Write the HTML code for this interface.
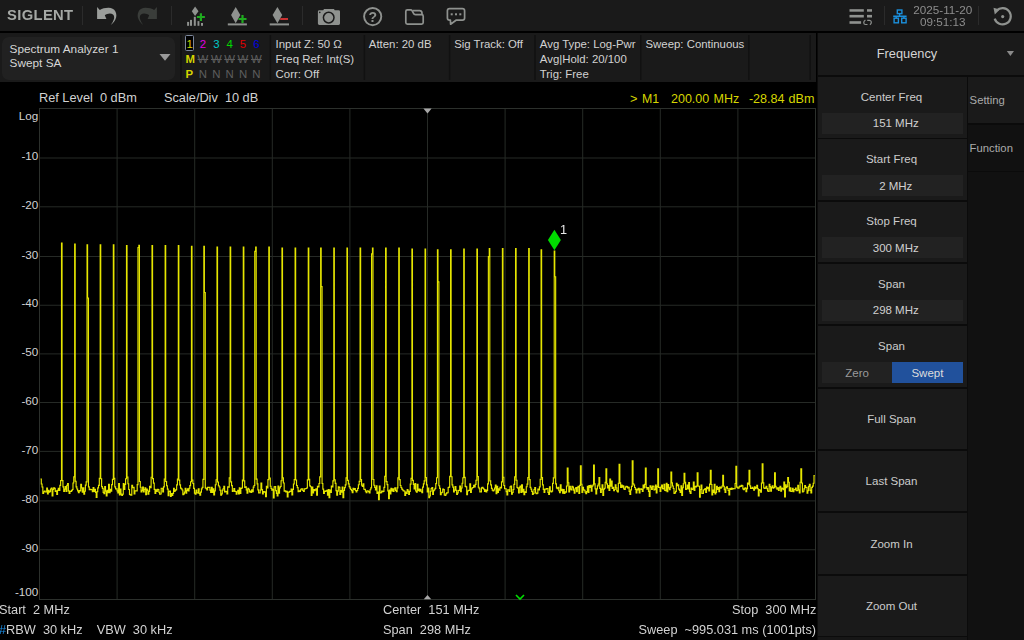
<!DOCTYPE html><html lang="en"><head><meta charset="utf-8"><title>Spectrum Analyzer</title><style>
*{margin:0;padding:0;box-sizing:border-box}
html,body{width:1024px;height:640px;overflow:hidden;background:#000}
body{position:relative;font-family:"Liberation Sans",sans-serif;color:#d2d2d2;font-size:11.4px;line-height:15px}
.a{position:absolute;white-space:pre}
.bar{position:absolute;background:#1a1a1a}
.sep{position:absolute;width:1px;background:#2b2b2b}
.dsep{position:absolute;width:2px;background:#101010;top:35px;height:45px}
.t{position:absolute;white-space:pre;line-height:15px}
.cell{position:absolute;left:818px;width:149px;background:#1a1a1a;height:60.5px}
.lbl{position:absolute;left:-1px;width:149px;text-align:center;white-space:pre;color:#cccccc;font-size:11.5px;line-height:14px}
.val{position:absolute;left:4px;width:140.5px;height:21px;background:#222;text-align:center;white-space:pre;color:#d0d0d0;font-size:11.5px;line-height:21px}
.ax{position:absolute;width:38.3px;left:0;text-align:right;white-space:pre;font-size:11.7px;line-height:12px;color:#d2d2d2}
.bt{position:absolute;white-space:pre;font-size:13.5px;line-height:15px;color:#d2d2d2;transform:scaleX(0.944);transform-origin:0 0}
.btr{transform-origin:100% 0}
</style></head><body>
<div class="bar" style="left:0;top:0;width:1024px;height:31px"></div>
<div class="a" style="left:6.6px;top:7.3px;font-weight:bold;font-size:14.6px;line-height:17px;color:#a6a9a6;letter-spacing:0.35px;transform-origin:0 0;transform:scaleX(1.012);will-change:transform">SIGLENT</div>
<div class="sep" style="left:81.5px;top:6px;height:19px"></div>
<div class="sep" style="left:171px;top:6px;height:19px"></div>
<div class="sep" style="left:302px;top:6px;height:19px"></div>
<div class="sep" style="left:884px;top:6px;height:19px"></div>
<div class="sep" style="left:977.5px;top:6px;height:19px"></div>
<svg class="a" style="left:0;top:0" width="1024" height="31" viewBox="0 0 1024 31">
<path transform="translate(96.8,7)" d="M0.3,0 L0.3,12 L9.6,12 L8,8.2 C10,6.6 14,5.6 16.2,7.5 C17.6,8.8 17.6,11 17,12.5 C16.4,14.5 15.4,16.2 14,18 C16.5,16 18,14 18.8,12 C19.8,9.6 19.9,7 18.6,4.4 C17.4,2 14.6,0.8 12,0.7 C8.8,0.6 5.4,1.4 3,2.9 Z" fill="#9b9e9b"/>
<path transform="translate(157.2,7) scale(-1,1)" d="M0.3,0 L0.3,12 L9.6,12 L8,8.2 C10,6.6 14,5.6 16.2,7.5 C17.6,8.8 17.6,11 17,12.5 C16.4,14.5 15.4,16.2 14,18 C16.5,16 18,14 18.8,12 C19.8,9.6 19.9,7 18.6,4.4 C17.4,2 14.6,0.8 12,0.7 C8.8,0.6 5.4,1.4 3,2.9 Z" fill="#3a3d3a"/>
<path d="M195.1,6.6 L198.5,11.3 L195.1,16 L191.8,11.3 Z" fill="#8f928f"/>
<rect x="187.1" y="21.9" width="2.0" height="3.9" fill="#8f928f"/>
<rect x="190" y="19.9" width="2" height="5.9" fill="#8f928f"/>
<rect x="193.8" y="16.8" width="2.0" height="9.0" fill="#8f928f"/>
<rect x="197.5" y="21.1" width="1.9" height="4.7" fill="#8f928f"/>
<rect x="201" y="23" width="2" height="2.8" fill="#8f928f"/>
<path d="M196.9,17 H204.9 M200.9,13.2 V20.9" stroke="#1faa1f" stroke-width="2.2" fill="none"/>
<path d="M235.7,7 L240.3,15 L235.7,23.2 L231.1,15 Z" fill="#8f928f"/>
<rect x="227.8" y="23.4" width="19.1" height="2" fill="#8f928f"/>
<path d="M238.5,19 H246.5 M242.5,15 V23" stroke="#1faa1f" stroke-width="2.2" fill="none"/>
<path d="M277.4,7 L282.2,15 L277.4,23.2 L272.6,15 Z" fill="#8f928f"/>
<rect x="269.7" y="23.4" width="19.3" height="2" fill="#8f928f"/>
<rect x="280.2" y="18" width="7.8" height="2" fill="#c83232"/>
<path d="M319.3,10.2 H323.2 L324,9 H334 L334.7,10.2 H338.6 Q340,10.2 340,11.6 V23.6 Q340,25 338.6,25 H319.3 Q317.9,25 317.9,23.6 V11.6 Q317.9,10.2 319.3,10.2 Z" fill="#8f928f"/>
<circle cx="328.7" cy="17.6" r="5.3" fill="none" stroke="#1a1a1a" stroke-width="1.5"/>
<circle cx="319.8" cy="12.4" r="0.8" fill="#1a1a1a"/>
<circle cx="372.7" cy="16.6" r="8.6" fill="none" stroke="#8f928f" stroke-width="1.9"/>
<text x="372.8" y="21.8" text-anchor="middle" font-family="Liberation Sans, sans-serif" font-size="14" font-weight="bold" fill="#8f928f">?</text>
<path d="M405.8,11.5 Q405.8,9.9 407.4,9.9 H410.6 Q411.6,9.9 412.2,10.9 L413.4,13.2 Q414,14.6 415.4,14.6 H421.6 Q423.2,14.6 423.2,16.2 V22.5 Q423.2,24.1 421.6,24.1 H407.4 Q405.8,24.1 405.8,22.5 Z" fill="none" stroke="#8f928f" stroke-width="1.7"/>
<path d="M412.6,10.6 H419.6 Q421.8,10.6 422,13 V14.8" fill="none" stroke="#8f928f" stroke-width="1.7"/>
<path d="M449.6,8.6 H462.4 Q464.6,8.6 464.6,10.8 V18 Q464.6,20.2 462.4,20.2 H456 L450.6,24.2 L450.4,20.2 H449.6 Q447.4,20.2 447.4,18 V10.8 Q447.4,8.6 449.6,8.6 Z" fill="none" stroke="#8f928f" stroke-width="1.7" stroke-linejoin="round"/>
<rect x="450.7" y="13.3" width="2" height="2" fill="#8f928f"/>
<rect x="455" y="13.3" width="2" height="2" fill="#8f928f"/>
<rect x="459.3" y="13.3" width="2" height="2" fill="#8f928f"/>
<rect x="849.5" y="9.2" width="14.3" height="2.5" fill="#8f928f"/>
<rect x="867" y="9.2" width="5" height="2.5" fill="#8f928f"/>
<rect x="849.5" y="14.9" width="14.3" height="2.6" fill="#8f928f"/>
<rect x="867" y="14.9" width="5" height="2.6" fill="#8f928f"/>
<rect x="849.5" y="21.2" width="11.6" height="2.6" fill="#8f928f"/>
<path d="M865.4,19.9 C863.1,21.4 863.2,24.3 865.6,24.5 H867.5 M867.2,20.3 H869.4 C871.8,20.5 872,23.2 869.9,24.7" fill="none" stroke="#8f928f" stroke-width="1.2"/>
<g fill="none" stroke="#1b8fdc" stroke-width="1.4"><rect x="897.3" y="10" width="4.6" height="3.6"/><path d="M899.6,13.8 V16.2 M893.2,16.2 H906.6 M896.2,16.2 V18 M903.9,16.2 V18"/><rect x="894.1" y="18.2" width="4.3" height="4.6"/><rect x="901.7" y="18.2" width="4.4" height="4.6"/></g>
<path d="M996.6,10.6 A8.2,8.2 0 1 1 994.7,18.6" fill="none" stroke="#8f928f" stroke-width="2.2"/>
<path d="M993.5,7.8 L999.8,9.4 L994.8,14.6 Z" fill="#8f928f"/>
<circle cx="1002.7" cy="16.6" r="1.6" fill="#8f928f"/>
</svg>
<div class="a" style="left:902.8px;width:80px;top:3.8px;text-align:center;font-size:11.7px;line-height:12.5px;color:#8d8d8d">2025-11-20
09:51:13</div>
<div class="bar" style="left:0;top:33px;width:816px;height:49px"></div>
<div class="a" style="left:2px;top:37px;width:172.5px;height:42.5px;background:#212121;border-radius:7px"></div>
<div class="t" style="left:9.6px;top:43.2px;font-size:11.8px;line-height:13.9px;color:#d6d6d6">Spectrum Analyzer 1
Swept SA</div>
<svg class="a" style="left:159px;top:53px" width="13" height="9"><path d="M0.5,1 H11.5 L6,7.8 Z" fill="#9a9a9a"/></svg>
<svg class="a" style="left:0;top:33px" width="816" height="49">
<rect x="180.25" y="2" width="1.5" height="45" fill="#111"/>
<rect x="269.65" y="2" width="1.5" height="45" fill="#111"/>
<rect x="363.65" y="2" width="1.5" height="45" fill="#111"/>
<rect x="448.85" y="2" width="1.5" height="45" fill="#111"/>
<rect x="534.25" y="2" width="1.5" height="45" fill="#111"/>
<rect x="640.00" y="2" width="1.5" height="45" fill="#111"/>
<rect x="748.15" y="2" width="1.5" height="45" fill="#111"/>
<rect x="809.45" y="2" width="1.5" height="45" fill="#111"/>
</svg>
<div class="a" style="left:185.2px;top:35px;width:8.8px;height:15.8px;border:1.6px solid #7c879c;border-radius:1.5px;background:#000"></div>
<div class="t" style="left:182.60px;width:14px;top:36.65px;text-align:center;font-size:11.4px;color:#d4d400">1</div>
<div class="t" style="left:183.30px;width:14px;top:51.7px;text-align:center;font-size:11.4px;color:#d4d400;font-weight:bold">M</div>
<div class="t" style="left:182.30px;width:14px;top:66.7px;text-align:center;font-size:11.4px;color:#d4d400;font-weight:bold">P</div>
<div class="t" style="left:195.95px;width:14px;top:36.65px;text-align:center;font-size:11.4px;color:#e000e0">2</div>
<div class="t" style="left:195.95px;width:14px;top:51.7px;text-align:center;font-size:11.4px;color:#5e5e5e;text-decoration:line-through">W</div>
<div class="t" style="left:195.95px;width:14px;top:66.7px;text-align:center;font-size:11.4px;color:#5e5e5e">N</div>
<div class="t" style="left:209.30px;width:14px;top:36.65px;text-align:center;font-size:11.4px;color:#00c8c8">3</div>
<div class="t" style="left:209.30px;width:14px;top:51.7px;text-align:center;font-size:11.4px;color:#5e5e5e;text-decoration:line-through">W</div>
<div class="t" style="left:209.30px;width:14px;top:66.7px;text-align:center;font-size:11.4px;color:#5e5e5e">N</div>
<div class="t" style="left:222.65px;width:14px;top:36.65px;text-align:center;font-size:11.4px;color:#00dc00">4</div>
<div class="t" style="left:222.65px;width:14px;top:51.7px;text-align:center;font-size:11.4px;color:#5e5e5e;text-decoration:line-through">W</div>
<div class="t" style="left:222.65px;width:14px;top:66.7px;text-align:center;font-size:11.4px;color:#5e5e5e">N</div>
<div class="t" style="left:236.00px;width:14px;top:36.65px;text-align:center;font-size:11.4px;color:#e00000">5</div>
<div class="t" style="left:236.00px;width:14px;top:51.7px;text-align:center;font-size:11.4px;color:#5e5e5e;text-decoration:line-through">W</div>
<div class="t" style="left:236.00px;width:14px;top:66.7px;text-align:center;font-size:11.4px;color:#5e5e5e">N</div>
<div class="t" style="left:249.35px;width:14px;top:36.65px;text-align:center;font-size:11.4px;color:#0000e0">6</div>
<div class="t" style="left:249.35px;width:14px;top:51.7px;text-align:center;font-size:11.4px;color:#5e5e5e;text-decoration:line-through">W</div>
<div class="t" style="left:249.35px;width:14px;top:66.7px;text-align:center;font-size:11.4px;color:#5e5e5e">N</div>
<div class="t" style="left:275.6px;top:36.65px">Input Z: 50 Ω
Freq Ref: Int(S)
Corr: Off</div>
<div class="t" style="left:368.8px;top:36.65px">Atten: 20 dB</div>
<div class="t" style="left:454.2px;top:36.65px">Sig Track: Off</div>
<div class="t" style="left:539.8px;top:36.65px">Avg Type: Log-Pwr
Avg|Hold: 20/100
Trig: Free</div>
<div class="t" style="left:645.5px;top:36.65px">Sweep: Continuous</div>
<div class="a" style="left:817px;top:33px;width:207px;height:607px;background:#0b0b0b"></div>
<div class="bar" style="left:818px;top:33px;width:206px;height:42px"></div>
<div class="a" style="left:818px;top:33px;width:178px;height:42px;line-height:42px;text-align:center;font-size:12.8px;color:#d4d4d4">Frequency</div>
<svg class="a" style="left:1006px;top:50px" width="9" height="7"><path d="M0.8,1 H8 L4.4,6 Z" fill="#8a8a8a"/></svg>
<div class="a" style="left:968px;top:77px;width:56px;height:46px;background:#1a1a1a"></div>
<div class="a" style="left:968px;top:124.5px;width:56px;height:46.3px;background:#111"></div>
<div class="a" style="left:968px;top:172px;width:56px;height:468px;background:#111"></div>
<div class="t" style="left:969.6px;top:93px;font-size:11.3px;color:#aaa">Setting</div>
<div class="t" style="left:969.6px;top:140.7px;font-size:11.3px;color:#aaa">Function</div>
<div class="cell" style="top:77.00px">
<div class="lbl" style="top:12.6px">Center Freq</div>
<div class="val" style="top:35.6px;padding-top:0.6px;padding-left:7px">151 MHz</div>
</div>
<div class="cell" style="top:139.33px">
<div class="lbl" style="top:12.6px">Start Freq</div>
<div class="val" style="top:35.6px;padding-top:0.6px;padding-left:7px">2 MHz</div>
</div>
<div class="cell" style="top:201.66px">
<div class="lbl" style="top:12.6px">Stop Freq</div>
<div class="val" style="top:35.6px;padding-top:0.6px;padding-left:7px">300 MHz</div>
</div>
<div class="cell" style="top:263.99px">
<div class="lbl" style="top:12.6px">Span</div>
<div class="val" style="top:35.6px;padding-top:0.6px;padding-left:7px">298 MHz</div>
</div>
<div class="cell" style="top:326.32px">
<div class="lbl" style="top:12.6px">Span</div>
<div class="val" style="top:35.6px;padding-top:0.6px;width:70.3px;color:#9a9a9a">Zero</div><div class="val" style="top:35.6px;padding-top:0.6px;left:74.3px;width:70.3px;background:#21519c;color:#dcdcdc">Swept</div>
</div>
<div class="cell" style="top:388.65px">
<div class="lbl" style="top:23.4px">Full Span</div>
</div>
<div class="cell" style="top:450.98px">
<div class="lbl" style="top:23.4px">Last Span</div>
</div>
<div class="cell" style="top:513.31px">
<div class="lbl" style="top:23.4px">Zoom In</div>
</div>
<div class="cell" style="top:575.64px">
<div class="lbl" style="top:23.4px">Zoom Out</div>
</div>
<div class="a" style="left:818px;top:637px;width:149px;height:3px;background:#161616"></div>
<div class="bt" style="left:38.5px;top:89.8px">Ref Level  0 dBm</div>
<div class="bt" style="left:164.1px;top:89.8px">Scale/Div  10 dB</div>
<div class="bt" style="left:630.2px;top:91.2px;color:#d6d600">&gt;</div>
<div class="bt" style="left:642.3px;top:91.2px;color:#d6d600;font-size:13.1px">M1</div>
<div class="bt" style="left:671.3px;top:91.2px;color:#d6d600;font-size:13.25px;word-spacing:0.8px">200.00 MHz</div>
<div class="bt btr" style="right:210px;top:91.2px;color:#d6d600;font-size:13.35px;word-spacing:0.4px">-28.84 dBm</div>
<div class="ax" style="top:109.6px">Log</div>
<div class="ax" style="top:150.1px">-10</div>
<div class="ax" style="top:198.9px">-20</div>
<div class="ax" style="top:248.6px">-30</div>
<div class="ax" style="top:297.4px">-40</div>
<div class="ax" style="top:346.0px">-50</div>
<div class="ax" style="top:394.6px">-60</div>
<div class="ax" style="top:443.5px">-70</div>
<div class="ax" style="top:493.0px">-80</div>
<div class="ax" style="top:541.9px">-90</div>
<div class="ax" style="top:585.9px">-100</div>
<svg class="a" style="left:0;top:0" width="1024" height="640" viewBox="0 0 1024 640">
<g stroke="#262a26" stroke-width="1" fill="none">
<path d="M117.10,108 V600"/>
<path d="M39,158.00 H816"/>
<path d="M194.70,108 V600"/>
<path d="M39,206.80 H816"/>
<path d="M272.30,108 V600"/>
<path d="M39,256.50 H816"/>
<path d="M349.90,108 V600"/>
<path d="M39,305.25 H816"/>
<path d="M427.50,108 V600"/>
<path d="M39,353.90 H816"/>
<path d="M505.10,108 V600"/>
<path d="M39,402.50 H816"/>
<path d="M582.70,108 V600"/>
<path d="M39,451.40 H816"/>
<path d="M660.30,108 V600"/>
<path d="M39,500.90 H816"/>
<path d="M737.90,108 V600"/>
<path d="M39,549.75 H816"/>
</g>
<rect x="39.5" y="108.5" width="776" height="491" fill="none" stroke="#2c302c" stroke-width="1"/>
<path d="M423.4,108.6 H431.6 L427.5,113.4 Z" fill="#a8a8a8"/>
<path d="M423.8,599.2 H431.2 L427.5,595 Z" fill="#a8a8a8"/>
<polyline points="40.51,479.0 41.29,479.0 41.29,484.0 42.06,484.0 42.06,487.0 42.83,487.0 42.83,493.3 43.61,493.3 43.61,491.7 44.38,491.7 44.38,491.1 45.15,491.1 45.15,492.0 45.93,492.0 45.93,492.0 46.70,492.0 46.70,488.1 47.47,488.1 47.47,493.9 48.25,493.9 48.25,490.2 49.02,490.2 49.02,492.1 49.80,492.1 49.80,491.3 50.57,491.3 50.57,489.0 51.34,489.0 51.34,488.1 52.12,488.1 52.12,495.8 52.89,495.8 52.89,489.3 53.66,489.3 53.66,487.9 54.44,487.9 54.44,488.3 55.21,488.3 55.21,491.3 55.98,491.3 55.98,490.7 56.76,490.7 56.76,494.3 57.53,494.3 57.53,490.3 58.30,490.3 58.30,488.3 59.08,488.3 59.08,490.3 59.85,490.3 59.85,485.4 60.62,485.4 60.62,480.5 61.51,480.5 61.51,243.1 62.05,243.1 62.05,480.6 62.94,480.6 62.94,486.9 63.72,486.9 63.72,491.5 64.49,491.5 64.49,489.1 65.27,489.1 65.27,486.5 66.04,486.5 66.04,491.3 66.81,491.3 66.81,485.3 67.59,485.3 67.59,483.5 68.36,483.5 68.36,490.8 69.13,490.8 69.13,493.3 69.91,493.3 69.91,491.3 70.68,491.3 70.68,491.3 71.45,491.3 71.45,490.6 72.23,490.6 72.23,489.5 73.00,489.5 73.00,483.0 73.77,483.0 73.77,476.8 74.66,476.8 74.66,244.1 75.20,244.1 75.20,481.2 76.09,481.2 76.09,486.8 76.87,486.8 76.87,489.0 77.64,489.0 77.64,490.8 78.41,490.8 78.41,492.6 79.19,492.6 79.19,490.6 79.96,490.6 79.96,490.9 80.74,490.9 80.74,484.3 81.51,484.3 81.51,487.8 82.28,487.8 82.28,492.2 83.06,492.2 83.06,487.8 83.83,487.8 83.83,494.1 84.60,494.1 84.60,491.2 85.38,491.2 85.38,485.1 86.15,485.1 86.15,481.8 87.04,481.8 87.04,244.7 87.58,244.7 87.58,298.0 88.47,298.0 88.47,486.9 89.24,486.9 89.24,489.6 90.02,489.6 90.02,489.4 90.79,489.4 90.79,489.6 91.56,489.6 91.56,489.7 92.34,489.7 92.34,491.7 93.11,491.7 93.11,487.5 93.88,487.5 93.88,491.3 94.66,491.3 94.66,489.4 95.43,489.4 95.43,492.4 96.21,492.4 96.21,497.4 96.98,497.4 96.98,491.6 97.75,491.6 97.75,487.8 98.53,487.8 98.53,485.3 99.30,485.3 99.30,478.3 100.19,478.3 100.19,244.8 100.73,244.8 100.73,478.7 101.62,478.7 101.62,486.6 102.39,486.6 102.39,488.3 103.17,488.3 103.17,492.3 103.94,492.3 103.94,493.6 104.71,493.6 104.71,486.5 105.49,486.5 105.49,491.1 106.26,491.1 106.26,496.0 107.03,496.0 107.03,490.2 107.81,490.2 107.81,492.7 108.58,492.7 108.58,484.4 109.35,484.4 109.35,492.7 110.13,492.7 110.13,489.3 110.90,489.3 110.90,491.1 111.68,491.1 111.68,484.6 112.45,484.6 112.45,479.3 113.34,479.3 113.34,244.8 113.88,244.8 113.88,478.3 114.77,478.3 114.77,486.9 115.54,486.9 115.54,489.0 116.32,489.0 116.32,488.9 117.09,488.9 117.09,490.8 117.86,490.8 117.86,492.9 118.64,492.9 118.64,483.5 119.41,483.5 119.41,494.8 120.18,494.8 120.18,489.1 120.96,489.1 120.96,494.1 121.73,494.1 121.73,495.5 122.50,495.5 122.50,494.2 123.28,494.2 123.28,483.6 124.05,483.6 124.05,489.5 124.82,489.5 124.82,484.5 125.60,484.5 125.60,478.7 126.49,478.7 126.49,245.5 127.03,245.5 127.03,477.1 127.92,477.1 127.92,483.7 128.69,483.7 128.69,489.5 129.47,489.5 129.47,494.3 130.24,494.3 130.24,494.8 131.01,494.8 131.01,495.1 131.79,495.1 131.79,485.3 132.56,485.3 132.56,487.6 133.33,487.6 133.33,487.2 134.11,487.2 134.11,493.9 134.88,493.9 134.88,490.7 135.65,490.7 135.65,490.8 136.43,490.8 136.43,491.0 137.20,491.0 137.20,484.6 137.97,484.6 137.97,247.5 138.86,247.5 138.86,245.3 139.40,245.3 139.40,481.5 140.29,481.5 140.29,487.2 141.07,487.2 141.07,491.8 141.84,491.8 141.84,490.4 142.62,490.4 142.62,487.0 143.39,487.0 143.39,491.9 144.16,491.9 144.16,489.5 144.94,489.5 144.94,487.7 145.71,487.7 145.71,494.7 146.48,494.7 146.48,489.0 147.26,489.0 147.26,490.4 148.03,490.4 148.03,494.2 148.80,494.2 148.80,491.5 149.58,491.5 149.58,486.3 150.35,486.3 150.35,487.6 151.12,487.6 151.12,477.2 152.01,477.2 152.01,245.5 152.55,245.5 152.55,478.6 153.44,478.6 153.44,483.1 154.22,483.1 154.22,489.4 154.99,489.4 154.99,493.3 155.76,493.3 155.76,489.8 156.54,489.8 156.54,491.4 157.31,491.4 157.31,489.2 158.09,489.2 158.09,489.6 158.86,489.6 158.86,492.2 159.63,492.2 159.63,494.1 160.41,494.1 160.41,494.0 161.18,494.0 161.18,488.2 161.95,488.2 161.95,488.2 162.73,488.2 162.73,492.0 163.50,492.0 163.50,486.9 164.27,486.9 164.27,479.0 165.16,479.0 165.16,245.5 165.70,245.5 165.70,481.5 166.59,481.5 166.59,485.7 167.37,485.7 167.37,489.1 168.14,489.1 168.14,495.7 168.91,495.7 168.91,491.4 169.69,491.4 169.69,491.1 170.46,491.1 170.46,496.5 171.23,496.5 171.23,493.5 172.01,493.5 172.01,495.4 172.78,495.4 172.78,493.4 173.56,493.4 173.56,488.2 174.33,488.2 174.33,491.3 175.10,491.3 175.10,490.4 175.88,490.4 175.88,489.6 176.65,489.6 176.65,484.9 177.42,484.9 177.42,479.1 178.31,479.1 178.31,245.5 178.85,245.5 178.85,480.1 179.74,480.1 179.74,484.8 180.52,484.8 180.52,488.1 181.29,488.1 181.29,488.9 182.06,488.9 182.06,490.0 182.84,490.0 182.84,494.7 183.61,494.7 183.61,493.8 184.38,493.8 184.38,492.0 185.16,492.0 185.16,488.2 185.93,488.2 185.93,493.1 186.70,493.1 186.70,490.3 187.48,490.3 187.48,488.7 188.25,488.7 188.25,490.8 189.03,490.8 189.03,488.2 189.80,488.2 189.80,485.6 190.57,485.6 190.57,481.7 191.46,481.7 191.46,246.2 192.00,246.2 192.00,480.1 192.89,480.1 192.89,483.5 193.67,483.5 193.67,488.4 194.44,488.4 194.44,493.1 195.21,493.1 195.21,494.1 195.99,494.1 195.99,490.0 196.76,490.0 196.76,492.8 197.53,492.8 197.53,493.0 198.31,493.0 198.31,488.7 199.08,488.7 199.08,493.4 199.85,493.4 199.85,495.1 200.63,495.1 200.63,492.1 201.40,492.1 201.40,488.9 202.17,488.9 202.17,487.4 202.95,487.4 202.95,479.4 203.84,479.4 203.84,246.2 204.38,246.2 204.38,292.5 205.27,292.5 205.27,487.8 206.04,487.8 206.04,488.6 206.82,488.6 206.82,489.9 207.59,489.9 207.59,487.4 208.36,487.4 208.36,487.3 209.14,487.3 209.14,487.3 209.91,487.3 209.91,490.1 210.68,490.1 210.68,492.3 211.46,492.3 211.46,487.3 212.23,487.3 212.23,492.3 213.00,492.3 213.00,488.7 213.78,488.7 213.78,494.8 214.55,494.8 214.55,490.9 215.32,490.9 215.32,484.7 216.10,484.7 216.10,479.7 216.99,479.7 216.99,247.0 217.53,247.0 217.53,482.0 218.42,482.0 218.42,485.7 219.19,485.7 219.19,487.0 219.97,487.0 219.97,490.2 220.74,490.2 220.74,495.1 221.51,495.1 221.51,493.8 222.29,493.8 222.29,490.1 223.06,490.1 223.06,488.7 223.83,488.7 223.83,486.2 224.61,486.2 224.61,492.0 225.38,492.0 225.38,491.3 226.15,491.3 226.15,491.6 226.93,491.6 226.93,494.0 227.70,494.0 227.70,486.7 228.47,486.7 228.47,487.1 229.25,487.1 229.25,477.9 230.14,477.9 230.14,247.0 230.68,247.0 230.68,481.9 231.57,481.9 231.57,485.6 232.34,485.6 232.34,491.4 233.11,491.4 233.11,490.9 233.89,490.9 233.89,488.5 234.66,488.5 234.66,491.3 235.44,491.3 235.44,491.5 236.21,491.5 236.21,494.2 236.98,494.2 236.98,492.0 237.76,492.0 237.76,490.2 238.53,490.2 238.53,493.9 239.30,493.9 239.30,487.8 240.08,487.8 240.08,493.4 240.85,493.4 240.85,488.5 241.62,488.5 241.62,488.0 242.40,488.0 242.40,480.1 243.29,480.1 243.29,247.0 243.83,247.0 243.83,480.9 244.72,480.9 244.72,487.4 245.49,487.4 245.49,486.9 246.26,486.9 246.26,489.9 247.04,489.9 247.04,493.2 247.81,493.2 247.81,488.4 248.58,488.4 248.58,489.2 249.36,489.2 249.36,491.8 250.13,491.8 250.13,491.0 250.91,491.0 250.91,492.5 251.68,492.5 251.68,489.8 252.45,489.8 252.45,491.6 253.23,491.6 253.23,487.1 254.00,487.1 254.00,485.5 254.77,485.5 254.77,251.4 255.66,251.4 255.66,247.0 256.20,247.0 256.20,479.1 257.09,479.1 257.09,483.9 257.87,483.9 257.87,489.8 258.64,489.8 258.64,492.8 259.41,492.8 259.41,492.9 260.19,492.9 260.19,490.1 260.96,490.1 260.96,483.0 261.73,483.0 261.73,489.5 262.51,489.5 262.51,494.0 263.28,494.0 263.28,491.6 264.05,491.6 264.05,492.2 264.83,492.2 264.83,491.7 265.60,491.7 265.60,496.6 266.38,496.6 266.38,486.3 267.15,486.3 267.15,488.0 267.92,488.0 267.92,479.6 268.81,479.6 268.81,247.0 269.35,247.0 269.35,478.1 270.24,478.1 270.24,486.2 271.02,486.2 271.02,488.5 271.79,488.5 271.79,490.2 272.56,490.2 272.56,489.3 273.34,489.3 273.34,497.8 274.11,497.8 274.11,486.8 274.88,486.8 274.88,486.5 275.66,486.5 275.66,490.6 276.43,490.6 276.43,493.4 277.20,493.4 277.20,496.0 277.98,496.0 277.98,486.0 278.75,486.0 278.75,493.1 279.52,493.1 279.52,487.8 280.30,487.8 280.30,486.5 281.07,486.5 281.07,480.7 281.96,480.7 281.96,248.1 282.50,248.1 282.50,477.8 283.39,477.8 283.39,483.0 284.17,483.0 284.17,491.1 284.94,491.1 284.94,490.9 285.71,490.9 285.71,491.9 286.49,491.9 286.49,491.3 287.26,491.3 287.26,496.9 288.03,496.9 288.03,492.1 288.81,492.1 288.81,492.1 289.58,492.1 289.58,491.4 290.35,491.4 290.35,491.3 291.13,491.3 291.13,489.1 291.90,489.1 291.90,494.8 292.67,494.8 292.67,489.3 293.45,489.3 293.45,484.0 294.22,484.0 294.22,479.5 295.11,479.5 295.11,248.1 295.65,248.1 295.65,480.0 296.54,480.0 296.54,485.5 297.32,485.5 297.32,487.6 298.09,487.6 298.09,491.6 298.86,491.6 298.86,490.7 299.64,490.7 299.64,491.3 300.41,491.3 300.41,489.8 301.18,489.8 301.18,488.9 301.96,488.9 301.96,488.7 302.73,488.7 302.73,490.5 303.50,490.5 303.50,491.5 304.28,491.5 304.28,488.8 305.05,488.8 305.05,488.7 305.82,488.7 305.82,488.5 306.60,488.5 306.60,488.0 307.37,488.0 307.37,479.9 308.26,479.9 308.26,248.1 308.80,248.1 308.80,479.2 309.69,479.2 309.69,485.9 310.46,485.9 310.46,486.7 311.24,486.7 311.24,495.3 312.01,495.3 312.01,487.1 312.79,487.1 312.79,492.9 313.56,492.9 313.56,489.6 314.33,489.6 314.33,490.6 315.11,490.6 315.11,489.9 315.88,489.9 315.88,488.8 316.65,488.8 316.65,495.2 317.43,495.2 317.43,486.4 318.20,486.4 318.20,487.0 318.97,487.0 318.97,483.5 319.75,483.5 319.75,476.9 320.64,476.9 320.64,248.1 321.18,248.1 321.18,286.6 322.07,286.6 322.07,483.5 322.84,483.5 322.84,489.1 323.61,489.1 323.61,493.4 324.39,493.4 324.39,491.1 325.16,491.1 325.16,491.3 325.93,491.3 325.93,490.8 326.71,490.8 326.71,490.4 327.48,490.4 327.48,495.2 328.26,495.2 328.26,489.6 329.03,489.6 329.03,497.6 329.80,497.6 329.80,490.1 330.58,490.1 330.58,492.5 331.35,492.5 331.35,486.1 332.12,486.1 332.12,487.0 332.90,487.0 332.90,480.9 333.79,480.9 333.79,248.1 334.33,248.1 334.33,479.7 335.22,479.7 335.22,483.3 335.99,483.3 335.99,490.6 336.76,490.6 336.76,495.2 337.54,495.2 337.54,491.1 338.31,491.1 338.31,486.8 339.08,486.8 339.08,487.4 339.86,487.4 339.86,494.3 340.63,494.3 340.63,490.6 341.40,490.6 341.40,492.1 342.18,492.1 342.18,487.0 342.95,487.0 342.95,497.6 343.73,497.6 343.73,490.5 344.50,490.5 344.50,487.6 345.27,487.6 345.27,484.8 346.05,484.8 346.05,477.9 346.94,477.9 346.94,248.1 347.48,248.1 347.48,480.3 348.37,480.3 348.37,483.8 349.14,483.8 349.14,486.6 349.91,486.6 349.91,488.1 350.69,488.1 350.69,489.5 351.46,489.5 351.46,490.6 352.23,490.6 352.23,492.7 353.01,492.7 353.01,488.4 353.78,488.4 353.78,489.4 354.55,489.4 354.55,488.6 355.33,488.6 355.33,490.5 356.10,490.5 356.10,491.9 356.87,491.9 356.87,490.5 357.65,490.5 357.65,488.3 358.42,488.3 358.42,484.7 359.20,484.7 359.20,481.4 360.09,481.4 360.09,248.1 360.63,248.1 360.63,479.5 361.52,479.5 361.52,485.2 362.29,485.2 362.29,486.3 363.06,486.3 363.06,483.9 363.84,483.9 363.84,489.2 364.61,489.2 364.61,489.3 365.38,489.3 365.38,491.2 366.16,491.2 366.16,492.7 366.93,492.7 366.93,490.7 367.70,490.7 367.70,491.0 368.48,491.0 368.48,491.6 369.25,491.6 369.25,492.8 370.02,492.8 370.02,489.7 370.80,489.7 370.80,487.8 371.57,487.8 371.57,253.8 372.46,253.8 372.46,248.1 373.00,248.1 373.00,479.5 373.89,479.5 373.89,485.2 374.67,485.2 374.67,487.5 375.44,487.5 375.44,489.9 376.21,489.9 376.21,485.8 376.99,485.8 376.99,493.4 377.76,493.4 377.76,492.1 378.53,492.1 378.53,499.6 379.31,499.6 379.31,486.0 380.08,486.0 380.08,493.0 380.85,493.0 380.85,492.6 381.63,492.6 381.63,491.0 382.40,491.0 382.40,491.6 383.17,491.6 383.17,491.4 383.95,491.4 383.95,487.3 384.72,487.3 384.72,476.3 385.61,476.3 385.61,248.1 386.15,248.1 386.15,481.6 387.04,481.6 387.04,484.6 387.81,484.6 387.81,490.9 388.59,490.9 388.59,498.6 389.36,498.6 389.36,490.1 390.14,490.1 390.14,493.8 390.91,493.8 390.91,488.4 391.68,488.4 391.68,491.0 392.46,491.0 392.46,488.7 393.23,488.7 393.23,491.4 394.00,491.4 394.00,489.0 394.78,489.0 394.78,487.9 395.55,487.9 395.55,490.3 396.32,490.3 396.32,491.7 397.10,491.7 397.10,487.8 397.87,487.8 397.87,477.8 398.76,477.8 398.76,248.1 399.30,248.1 399.30,479.6 400.19,479.6 400.19,485.5 400.96,485.5 400.96,487.5 401.74,487.5 401.74,489.1 402.51,489.1 402.51,490.0 403.28,490.0 403.28,490.8 404.06,490.8 404.06,491.0 404.83,491.0 404.83,495.3 405.61,495.3 405.61,492.0 406.38,492.0 406.38,493.5 407.15,493.5 407.15,489.5 407.93,489.5 407.93,491.1 408.70,491.1 408.70,494.5 409.47,494.5 409.47,491.3 410.25,491.3 410.25,484.1 411.02,484.1 411.02,478.3 411.91,478.3 411.91,249.0 412.45,249.0 412.45,480.3 413.34,480.3 413.34,484.5 414.11,484.5 414.11,488.9 414.89,488.9 414.89,483.6 415.66,483.6 415.66,491.0 416.43,491.0 416.43,492.1 417.21,492.1 417.21,484.3 417.98,484.3 417.98,490.7 418.75,490.7 418.75,489.0 419.53,489.0 419.53,491.2 420.30,491.2 420.30,489.2 421.08,489.2 421.08,491.2 421.85,491.2 421.85,492.7 422.62,492.7 422.62,487.1 423.40,487.1 423.40,483.9 424.17,483.9 424.17,480.8 425.06,480.8 425.06,249.0 425.60,249.0 425.60,477.5 426.49,477.5 426.49,484.8 427.26,484.8 427.26,491.8 428.04,491.8 428.04,488.0 428.81,488.0 428.81,497.6 429.58,497.6 429.58,496.0 430.36,496.0 430.36,491.2 431.13,491.2 431.13,488.5 431.90,488.5 431.90,487.6 432.68,487.6 432.68,494.3 433.45,494.3 433.45,490.6 434.22,490.6 434.22,489.7 435.00,489.7 435.00,488.3 435.77,488.3 435.77,483.6 436.55,483.6 436.55,477.7 437.44,477.7 437.44,249.8 437.98,249.8 437.98,281.9 438.87,281.9 438.87,485.7 439.64,485.7 439.64,488.4 440.41,488.4 440.41,494.6 441.19,494.6 441.19,492.7 441.96,492.7 441.96,492.2 442.73,492.2 442.73,489.0 443.51,489.0 443.51,489.6 444.28,489.6 444.28,495.0 445.05,495.0 445.05,495.5 445.83,495.5 445.83,493.9 446.60,493.9 446.60,492.9 447.37,492.9 447.37,492.7 448.15,492.7 448.15,487.5 448.92,487.5 448.92,487.1 449.69,487.1 449.69,476.4 450.58,476.4 450.58,249.8 451.12,249.8 451.12,476.7 452.02,476.7 452.02,484.8 452.79,484.8 452.79,487.1 453.56,487.1 453.56,492.0 454.34,492.0 454.34,490.0 455.11,490.0 455.11,486.6 455.88,486.6 455.88,490.4 456.66,490.4 456.66,494.4 457.43,494.4 457.43,492.8 458.20,492.8 458.20,490.5 458.98,490.5 458.98,490.3 459.75,490.3 459.75,486.1 460.52,486.1 460.52,491.6 461.30,491.6 461.30,488.0 462.07,488.0 462.07,483.2 462.84,483.2 462.84,477.7 463.73,477.7 463.73,249.0 464.27,249.0 464.27,477.4 465.16,477.4 465.16,486.3 465.94,486.3 465.94,486.9 466.71,486.9 466.71,494.6 467.49,494.6 467.49,491.0 468.26,491.0 468.26,490.3 469.03,490.3 469.03,490.3 469.81,490.3 469.81,483.9 470.58,483.9 470.58,492.4 471.35,492.4 471.35,488.9 472.13,488.9 472.13,487.7 472.90,487.7 472.90,487.5 473.67,487.5 473.67,485.3 474.45,485.3 474.45,486.8 475.22,486.8 475.22,484.3 475.99,484.3 475.99,480.2 476.88,480.2 476.88,249.0 477.42,249.0 477.42,476.6 478.31,476.6 478.31,487.2 479.09,487.2 479.09,488.7 479.86,488.7 479.86,491.9 480.63,491.9 480.63,491.9 481.41,491.9 481.41,487.7 482.18,487.7 482.18,487.4 482.96,487.4 482.96,488.4 483.73,488.4 483.73,489.2 484.50,489.2 484.50,491.4 485.28,491.4 485.28,489.9 486.05,489.9 486.05,491.9 486.82,491.9 486.82,490.3 487.60,490.3 487.60,483.8 488.37,483.8 488.37,256.6 489.26,256.6 489.26,248.6 489.80,248.6 489.80,480.8 490.69,480.8 490.69,484.8 491.46,484.8 491.46,488.3 492.24,488.3 492.24,490.1 493.01,490.1 493.01,490.9 493.78,490.9 493.78,490.0 494.56,490.0 494.56,488.0 495.33,488.0 495.33,485.1 496.10,485.1 496.10,493.7 496.88,493.7 496.88,486.2 497.65,486.2 497.65,492.5 498.43,492.5 498.43,488.7 499.20,488.7 499.20,490.1 499.97,490.1 499.97,487.4 500.75,487.4 500.75,487.8 501.52,487.8 501.52,481.8 502.41,481.8 502.41,248.6 502.95,248.6 502.95,477.2 503.84,477.2 503.84,485.5 504.61,485.5 504.61,488.7 505.39,488.7 505.39,488.7 506.16,488.7 506.16,491.6 506.93,491.6 506.93,494.8 507.71,494.8 507.71,489.8 508.48,489.8 508.48,489.7 509.25,489.7 509.25,491.5 510.03,491.5 510.03,486.8 510.80,486.8 510.80,486.0 511.57,486.0 511.57,494.2 512.35,494.2 512.35,492.5 513.12,492.5 513.12,489.5 513.90,489.5 513.90,484.3 514.67,484.3 514.67,476.8 515.56,476.8 515.56,248.6 516.10,248.6 516.10,480.2 516.99,480.2 516.99,487.5 517.76,487.5 517.76,488.2 518.54,488.2 518.54,492.9 519.31,492.9 519.31,487.2 520.08,487.2 520.08,486.1 520.86,486.1 520.86,492.4 521.63,492.4 521.63,484.9 522.40,484.9 522.40,492.0 523.18,492.0 523.18,489.2 523.95,489.2 523.95,494.7 524.72,494.7 524.72,491.8 525.50,491.8 525.50,492.4 526.27,492.4 526.27,486.7 527.04,486.7 527.04,484.1 527.82,484.1 527.82,477.5 528.71,477.5 528.71,248.6 529.25,248.6 529.25,479.6 530.14,479.6 530.14,487.4 530.91,487.4 530.91,489.1 531.69,489.1 531.69,491.3 532.46,491.3 532.46,494.5 533.23,494.5 533.23,493.3 534.01,493.3 534.01,489.5 534.78,489.5 534.78,487.5 535.55,487.5 535.55,493.0 536.33,493.0 536.33,493.6 537.10,493.6 537.10,493.1 537.87,493.1 537.87,489.0 538.65,489.0 538.65,489.9 539.42,489.9 539.42,486.9 540.19,486.9 540.19,479.3 541.08,479.3 541.08,249.7 541.62,249.7 541.62,477.6 542.51,477.6 542.51,484.9 543.29,484.9 543.29,489.4 544.06,489.4 544.06,492.3 544.84,492.3 544.84,489.1 545.61,489.1 545.61,489.1 546.38,489.1 546.38,488.5 547.16,488.5 547.16,488.6 547.93,488.6 547.93,492.3 548.70,492.3 548.70,494.3 549.48,494.3 549.48,486.7 550.25,486.7 550.25,491.1 551.02,491.1 551.02,491.9 551.80,491.9 551.80,491.1 552.57,491.1 552.57,483.4 553.34,483.4 553.34,477.9 554.23,477.9 554.23,251.0 554.77,251.0 554.77,276.7 555.66,276.7 555.66,483.9 556.44,483.9 556.44,487.9 557.21,487.9 557.21,488.7 557.98,488.7 557.98,487.2 558.76,487.2 558.76,490.7 559.53,490.7 559.53,492.6 560.31,492.6 560.31,484.8 561.08,484.8 561.08,490.7 561.85,490.7 561.85,489.3 562.63,489.3 562.63,493.1 563.40,493.1 563.40,489.6 564.17,489.6 564.17,493.5 564.95,493.5 564.95,491.9 565.72,491.9 565.72,492.1 566.49,492.1 566.49,486.0 567.27,486.0 567.27,468.1 568.04,468.1 568.04,482.7 568.81,482.7 568.81,491.8 569.59,491.8 569.59,486.3 570.36,486.3 570.36,489.1 571.13,489.1 571.13,489.9 571.91,489.9 571.91,486.3 572.68,486.3 572.68,487.1 573.45,487.1 573.45,490.1 574.23,490.1 574.23,493.1 575.00,493.1 575.00,488.7 575.78,488.7 575.78,487.6 576.55,487.6 576.55,491.6 577.32,491.6 577.32,487.2 578.10,487.2 578.10,486.4 578.87,486.4 578.87,493.5 579.64,493.5 579.64,485.4 580.42,485.4 580.42,465.8 581.19,465.8 581.19,484.2 581.96,484.2 581.96,492.5 582.74,492.5 582.74,487.4 583.51,487.4 583.51,489.9 584.28,489.9 584.28,490.2 585.06,490.2 585.06,492.1 585.83,492.1 585.83,493.6 586.60,493.6 586.60,491.6 587.38,491.6 587.38,486.2 588.15,486.2 588.15,492.5 588.92,492.5 588.92,485.6 589.70,485.6 589.70,487.4 590.47,487.4 590.47,485.4 591.25,485.4 591.25,491.2 592.02,491.2 592.02,486.2 592.79,486.2 592.79,485.0 593.57,485.0 593.57,465.0 594.34,465.0 594.34,483.8 595.11,483.8 595.11,488.8 595.89,488.8 595.89,494.0 596.66,494.0 596.66,488.8 597.43,488.8 597.43,485.9 598.21,485.9 598.21,484.0 598.98,484.0 598.98,477.5 599.75,477.5 599.75,488.3 600.53,488.3 600.53,492.4 601.30,492.4 601.30,489.3 602.07,489.3 602.07,484.8 602.85,484.8 602.85,495.5 603.62,495.5 603.62,489.2 604.39,489.2 604.39,488.2 605.17,488.2 605.17,482.4 605.94,482.4 605.94,468.9 606.72,468.9 606.72,483.9 607.49,483.9 607.49,487.8 608.26,487.8 608.26,485.5 609.04,485.5 609.04,490.3 609.81,490.3 609.81,479.0 610.58,479.0 610.58,486.1 611.36,486.1 611.36,481.0 612.13,481.0 612.13,488.3 612.90,488.3 612.90,487.4 613.68,487.4 613.68,490.7 614.45,490.7 614.45,489.5 615.22,489.5 615.22,484.9 616.00,484.9 616.00,487.7 616.77,487.7 616.77,490.9 617.54,490.9 617.54,492.0 618.32,492.0 618.32,483.4 619.09,483.4 619.09,464.2 619.86,464.2 619.86,482.8 620.64,482.8 620.64,487.4 621.41,487.4 621.41,485.0 622.19,485.0 622.19,487.1 622.96,487.1 622.96,485.9 623.73,485.9 623.73,488.9 624.51,488.9 624.51,489.3 625.28,489.3 625.28,487.1 626.05,487.1 626.05,486.4 626.83,486.4 626.83,486.6 627.60,486.6 627.60,487.8 628.37,487.8 628.37,487.4 629.15,487.4 629.15,491.3 629.92,491.3 629.92,494.4 630.69,494.4 630.69,489.8 631.47,489.8 631.47,486.3 632.24,486.3 632.24,460.8 633.01,460.8 633.01,483.7 633.79,483.7 633.79,485.0 634.56,485.0 634.56,487.5 635.33,487.5 635.33,489.3 636.11,489.3 636.11,492.9 636.88,492.9 636.88,489.0 637.66,489.0 637.66,489.8 638.43,489.8 638.43,488.3 639.20,488.3 639.20,493.0 639.98,493.0 639.98,489.1 640.75,489.1 640.75,488.9 641.52,488.9 641.52,489.4 642.30,489.4 642.30,491.4 643.07,491.4 643.07,485.0 643.84,485.0 643.84,487.8 644.62,487.8 644.62,484.4 645.39,484.4 645.39,468.1 646.16,468.1 646.16,487.5 646.94,487.5 646.94,489.1 647.71,489.1 647.71,487.6 648.48,487.6 648.48,491.4 649.26,491.4 649.26,496.5 650.03,496.5 650.03,485.9 650.80,485.9 650.80,487.2 651.58,487.2 651.58,489.4 652.35,489.4 652.35,486.1 653.13,486.1 653.13,486.2 653.90,486.2 653.90,490.0 654.67,490.0 654.67,489.4 655.45,489.4 655.45,485.1 656.22,485.1 656.22,492.9 656.99,492.9 656.99,486.6 657.77,486.6 657.77,468.9 658.54,468.9 658.54,487.3 659.31,487.3 659.31,487.5 660.09,487.5 660.09,491.4 660.86,491.4 660.86,487.1 661.63,487.1 661.63,485.1 662.41,485.1 662.41,488.6 663.18,488.6 663.18,488.8 663.95,488.8 663.95,484.2 664.73,484.2 664.73,490.4 665.50,490.4 665.50,490.7 666.27,490.7 666.27,483.4 667.05,483.4 667.05,491.6 667.82,491.6 667.82,484.5 668.60,484.5 668.60,487.9 669.37,487.9 669.37,489.6 670.14,489.6 670.14,487.2 670.92,487.2 670.92,472.0 671.69,472.0 671.69,482.8 672.46,482.8 672.46,486.0 673.24,486.0 673.24,488.5 674.01,488.5 674.01,493.3 674.78,493.3 674.78,492.9 675.56,492.9 675.56,491.3 676.33,491.3 676.33,483.4 677.10,483.4 677.10,485.7 677.88,485.7 677.88,484.9 678.65,484.9 678.65,489.1 679.42,489.1 679.42,490.4 680.20,490.4 680.20,492.5 680.97,492.5 680.97,485.8 681.74,485.8 681.74,495.5 682.52,495.5 682.52,487.7 683.29,487.7 683.29,483.7 684.07,483.7 684.07,473.3 684.84,473.3 684.84,482.2 685.61,482.2 685.61,489.3 686.39,489.3 686.39,488.7 687.16,488.7 687.16,485.0 687.93,485.0 687.93,488.9 688.71,488.9 688.71,482.5 689.48,482.5 689.48,491.6 690.25,491.6 690.25,493.3 691.03,493.3 691.03,488.1 691.80,488.1 691.80,489.4 692.57,489.4 692.57,489.1 693.35,489.1 693.35,482.0 694.12,482.0 694.12,490.4 694.89,490.4 694.89,486.3 695.67,486.3 695.67,487.0 696.44,487.0 696.44,486.1 697.21,486.1 697.21,472.8 697.99,472.8 697.99,486.0 698.76,486.0 698.76,486.2 699.54,486.2 699.54,497.1 700.31,497.1 700.31,489.5 701.08,489.5 701.08,485.0 701.86,485.0 701.86,493.4 702.63,493.4 702.63,493.3 703.40,493.3 703.40,490.0 704.18,490.0 704.18,489.5 704.95,489.5 704.95,488.5 705.72,488.5 705.72,492.5 706.50,492.5 706.50,487.0 707.27,487.0 707.27,488.7 708.04,488.7 708.04,487.3 708.82,487.3 708.82,490.9 709.59,490.9 709.59,484.1 710.36,484.1 710.36,470.2 711.14,470.2 711.14,484.5 711.91,484.5 711.91,494.9 712.68,494.9 712.68,490.0 713.46,490.0 713.46,492.5 714.23,492.5 714.23,484.2 715.01,484.2 715.01,493.9 715.78,493.9 715.78,492.3 716.55,492.3 716.55,486.2 717.33,486.2 717.33,489.4 718.10,489.4 718.10,487.5 718.87,487.5 718.87,491.6 719.65,491.6 719.65,487.1 720.42,487.1 720.42,488.1 721.19,488.1 721.19,487.2 721.97,487.2 721.97,486.0 722.74,486.0 722.74,475.2 723.51,475.2 723.51,486.2 724.29,486.2 724.29,489.7 725.06,489.7 725.06,492.5 725.83,492.5 725.83,487.7 726.61,487.7 726.61,486.9 727.38,486.9 727.38,488.5 728.15,488.5 728.15,490.5 728.93,490.5 728.93,495.0 729.70,495.0 729.70,488.5 730.48,488.5 730.48,489.4 731.25,489.4 731.25,488.0 732.02,488.0 732.02,489.1 732.80,489.1 732.80,488.5 733.57,488.5 733.57,488.7 734.34,488.7 734.34,488.7 735.12,488.7 735.12,483.5 735.89,483.5 735.89,466.2 736.66,466.2 736.66,487.1 737.44,487.1 737.44,487.9 738.21,487.9 738.21,488.2 738.98,488.2 738.98,486.8 739.76,486.8 739.76,486.1 740.53,486.1 740.53,486.5 741.30,486.5 741.30,485.3 742.08,485.3 742.08,485.7 742.85,485.7 742.85,488.9 743.62,488.9 743.62,489.6 744.40,489.6 744.40,488.4 745.17,488.4 745.17,487.7 745.95,487.7 745.95,491.7 746.72,491.7 746.72,488.6 747.49,488.6 747.49,483.0 748.27,483.0 748.27,484.1 749.04,484.1 749.04,470.2 749.81,470.2 749.81,485.8 750.59,485.8 750.59,488.4 751.36,488.4 751.36,488.4 752.13,488.4 752.13,487.2 752.91,487.2 752.91,488.5 753.68,488.5 753.68,490.2 754.45,490.2 754.45,486.8 755.23,486.8 755.23,488.6 756.00,488.6 756.00,487.6 756.77,487.6 756.77,485.2 757.55,485.2 757.55,488.7 758.32,488.7 758.32,495.9 759.09,495.9 759.09,489.5 759.87,489.5 759.87,490.3 760.64,490.3 760.64,492.2 761.42,492.2 761.42,483.1 762.19,483.1 762.19,463.9 762.96,463.9 762.96,482.7 763.74,482.7 763.74,488.0 764.51,488.0 764.51,488.4 765.28,488.4 765.28,487.8 766.06,487.8 766.06,486.3 766.83,486.3 766.83,488.6 767.60,488.6 767.60,491.0 768.38,491.0 768.38,491.4 769.15,491.4 769.15,484.4 769.92,484.4 769.92,486.6 770.70,486.6 770.70,491.2 771.47,491.2 771.47,487.5 772.24,487.5 772.24,485.8 773.02,485.8 773.02,488.1 773.79,488.1 773.79,487.5 774.56,487.5 774.56,472.8 775.34,472.8 775.34,486.4 776.11,486.4 776.11,488.0 776.89,488.0 776.89,489.1 777.66,489.1 777.66,487.8 778.43,487.8 778.43,490.5 779.21,490.5 779.21,487.7 779.98,487.7 779.98,486.3 780.75,486.3 780.75,491.2 781.53,491.2 781.53,488.0 782.30,488.0 782.30,488.6 783.07,488.6 783.07,489.7 783.85,489.7 783.85,482.1 784.62,482.1 784.62,496.9 785.39,496.9 785.39,484.7 786.17,484.7 786.17,487.6 786.94,487.6 786.94,486.3 787.71,486.3 787.71,477.5 788.49,477.5 788.49,482.2 789.26,482.2 789.26,490.8 790.03,490.8 790.03,487.9 790.81,487.9 790.81,491.3 791.58,491.3 791.58,491.2 792.36,491.2 792.36,488.2 793.13,488.2 793.13,491.7 793.90,491.7 793.90,489.7 794.68,489.7 794.68,489.6 795.45,489.6 795.45,488.1 796.22,488.1 796.22,490.6 797.00,490.6 797.00,490.7 797.77,490.7 797.77,485.4 798.54,485.4 798.54,489.9 799.32,489.9 799.32,492.8 800.09,492.8 800.09,482.2 800.86,482.2 800.86,468.9 801.64,468.9 801.64,483.0 802.41,483.0 802.41,491.9 803.18,491.9 803.18,491.2 803.96,491.2 803.96,488.8 804.73,488.8 804.73,485.5 805.50,485.5 805.50,487.5 806.28,487.5 806.28,487.2 807.05,487.2 807.05,493.2 807.83,493.2 807.83,490.7 808.60,490.7 808.60,486.4 809.37,486.4 809.37,484.4 810.15,484.4 810.15,490.3 810.92,490.3 810.92,493.0 811.69,493.0 811.69,487.4 812.47,487.4 812.47,486.1 813.24,486.1 813.24,483.2 814.01,483.2 814.01,475.6 814.79,475.6" fill="none" stroke="#e6e600" stroke-width="1.15" stroke-linejoin="miter"/>
<path d="M554.4,229.8 L560.9,240 L554.4,250.2 L547.9,240 Z" fill="#00dc00"/>
<path d="M516,595 L520,599 L524,595" fill="none" stroke="#00e000" stroke-width="1.6"/>
<text x="559.9" y="233.7" font-family="Liberation Sans, sans-serif" font-size="12.7" fill="#e8e8e8">1</text>
</svg>
<div class="bt" style="left:-0.8px;top:602.3px">Start  2 MHz</div>
<div class="bt" style="left:-0.8px;top:622.1px"><span style="color:#1e90e8">#</span>RBW  30 kHz    VBW  30 kHz</div>
<div class="bt" style="left:382.7px;top:602.3px">Center  151 MHz</div>
<div class="bt" style="left:382.7px;top:622.1px">Span  298 MHz</div>
<div class="bt btr" style="right:208px;top:602.3px">Stop  300 MHz</div>
<div class="bt btr" style="right:208px;top:622.1px">Sweep  ~995.031 ms (1001pts)</div>
</body></html>
